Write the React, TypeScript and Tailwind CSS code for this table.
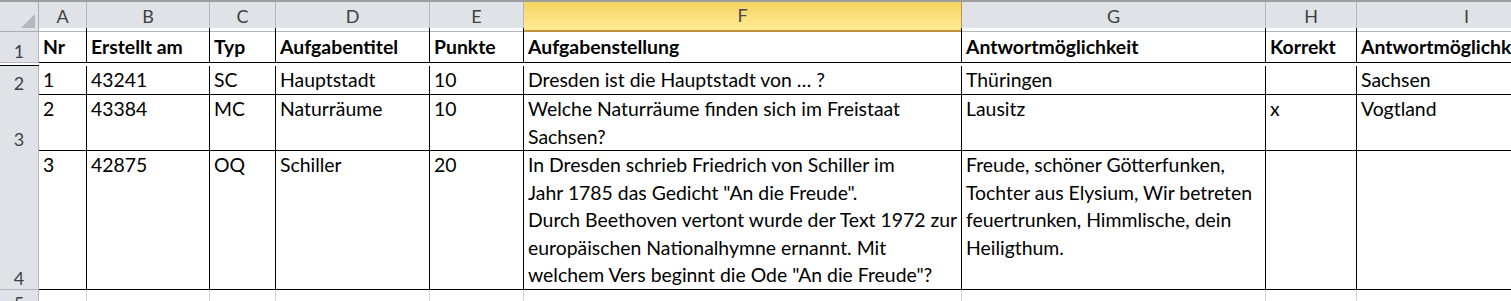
import React from "react";

const cols = ["A", "B", "C", "D", "E", "F", "G", "H", "I"];
const grid = "grid grid-cols-[39px_48px_123px_66px_154px_94px_438px_304px_91px_220px]";

const rows: { h: string; align: string; bold?: boolean; cells: string[] }[] = [
  {
    h: "h-[38px]",
    align: "items-center pt-[4px]",
    bold: true,
    cells: ["Nr", "Erstellt am", "Typ", "Aufgabentitel", "Punkte", "Aufgabenstellung", "Antwortmöglichkeit", "Korrekt", "Antwortmöglichkeit"],
  },
  {
    h: "h-[28px]",
    align: "items-center",
    cells: ["1", "43241", "SC", "Hauptstadt", "10", "Dresden ist die Hauptstadt von … ?", "Thüringen", "", "Sachsen"],
  },
  {
    h: "h-[56px]",
    align: "items-start pt-[1px]",
    cells: ["2", "43384", "MC", "Naturräume", "10", "Welche Naturräume finden sich im Freistaat\nSachsen?", "Lausitz", "x", "Vogtland"],
  },
  {
    h: "h-[140px]",
    align: "items-start pt-[1px]",
    cells: [
      "3",
      "42875",
      "OQ",
      "Schiller",
      "20",
      'In Dresden schrieb Friedrich von Schiller im\nJahr 1785 das Gedicht "An die Freude".\nDurch Beethoven vertont wurde der Text 1972 zur\neuropäischen Nationalhymne ernannt. Mit\nwelchem Vers beginnt die Ode "An die Freude"?',
      "Freude, schöner Götterfunken,\nTochter aus Elysium, Wir betreten\nfeuertrunken, Himmlische, dein\nHeiligthum.",
      "",
      "",
    ],
  },
];

function ColumnHeader() {
  return (
    <div className={`${grid} h-[28px] border-t-2 border-[#9d9d9d] bg-[#dfe3e8] text-[18px]`}>
      <div className="relative border-r border-b border-[#a9aeb5]">
        <div className="absolute right-[3px] bottom-[3px] w-0 h-0 border-l-[14px] border-l-transparent border-b-[14px] border-b-[#b4b8be]" />
      </div>
      {cols.map((c) =>
        c === "F" ? (
          <div
            key={c}
            className="flex items-center justify-center border-r border-b-2 border-[#c2913f] bg-gradient-to-b from-[#f8d45f] to-[#feeb97] text-[#4a4a4a]"
          >
            {c}
          </div>
        ) : (
          <div key={c} className="flex items-center justify-center border-r border-b border-[#b3b8bf] text-[#3f3f3f]">
            {c}
          </div>
        )
      )}
      <div className="border-b border-[#b3b8bf]" />
    </div>
  );
}

export default function App() {
  return (
    <div
      className="w-[1511px] h-[301px] overflow-hidden bg-white text-[19.4px] leading-[27.6px] text-black"
      style={{ fontFamily: "Lato, 'Open Sans', sans-serif" }}
    >
      <ColumnHeader />
      {rows.map((r, i) => (
        <div key={i} className={`${grid} ${r.h}`}>
          <div className="flex items-end justify-center border-r border-b border-[#b3b8bf] bg-[#dfe3e8] text-[18px] leading-[22px] text-[#3f3f3f]">
            {i + 1}
          </div>
          {r.cells.map((t, j) => (
            <div
              key={j}
              className={`flex ${r.align} overflow-visible whitespace-pre border-r border-b border-black px-[4px] ${r.bold ? "font-bold" : ""}`}
            >
              {t}
            </div>
          ))}
          <div className="border-b border-black" />
        </div>
      ))}
      <div className={`${grid} h-[28px]`}>
        <div className="flex items-center justify-center border-r border-[#b3b8bf] bg-[#dfe3e8] text-[18px] text-[#3f3f3f]">5</div>
        {cols.map((c) => (
          <div key={c} className="border-r border-[#d4d4d4]" />
        ))}
      </div>
    </div>
  );
}
